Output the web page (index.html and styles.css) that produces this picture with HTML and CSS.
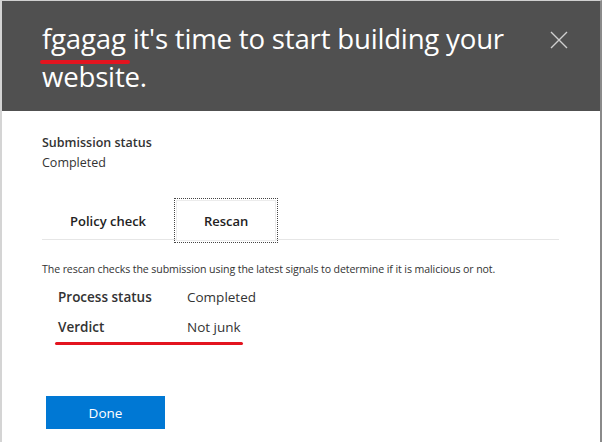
FILE: index.html
```html
<!DOCTYPE html>
<html lang="en">
<head>
<meta charset="utf-8">
<title>Submission</title>
<link rel="stylesheet" href="styles.css">
</head>
<body>
<div class="panel">
  <header class="head">
    <h1 class="title"><span class="mark">fgagag</span> it's time to start building your website.</h1>
    <button class="close" aria-label="Close">
      <svg width="18" height="18" viewBox="0 0 18 18"><path d="M1 1L17 17M17 1L1 17" stroke="#cfcfcf" stroke-width="1.4" fill="none"/></svg>
    </button>
  </header>
  <main class="content">
    <div class="status">
      <div class="label">Submission status</div>
      <div class="value">Completed</div>
    </div>
    <nav class="tabs">
      <div class="tab">Policy check</div>
      <div class="tab active">Rescan</div>
    </nav>
    <p class="desc">The rescan checks the submission using the latest signals to determine if it is malicious or not.</p>
    <div class="facts">
      <div class="row"><span class="k">Process status</span><span class="v">Completed</span></div>
      <div class="row marked"><span class="k">Verdict</span><span class="v">Not junk</span></div>
    </div>
    <div class="actions">
      <button class="done">Done</button>
    </div>
  </main>
</div>
</body>
</html>
```
FILE: styles.css
```css
* { box-sizing: border-box; }
html, body { margin: 0; padding: 0; background: #fff; }
body { font-family: "Open Sans", "Noto Sans", sans-serif; color: #333; }
.panel {
  width: 602px;
  height: 442px;
  border-top: 1px solid #d0d0d0;
  border-left: 2px solid #d4d4d4;
  border-right: 2px solid #8a8a8a;
  display: flex;
  flex-direction: column;
  overflow: hidden;
}
.head {
  background: #505050;
  height: 110px;
  display: flex;
  justify-content: space-between;
  align-items: flex-start;
  padding: 18px 32px 0 40px;
}
.title {
  margin: 0;
  font-weight: 400;
  font-size: 27.6px;
  line-height: 38px;
  color: #fff;
  width: 490px;
  letter-spacing: -0.2px;
}
.mark { position: relative; }
.mark::after {
  content: "";
  position: absolute;
  left: -2px;
  right: -4px;
  bottom: -7px;
  height: 4px;
  border-radius: 2px;
  background: #e3141f;
}
.close {
  background: none;
  border: 0;
  padding: 0;
  margin-top: 12px;
  width: 18px;
  height: 18px;
  cursor: pointer;
}
.close svg { display: block; }
.content {
  padding: 0 41px 0 40px;
  flex: 1;
}
.status { padding-top: 22px; }
.label { font-weight: 600; font-size: 12.5px; line-height: 20px; color: #333; }
.value { font-size: 12.5px; line-height: 20px; color: #333; }
.tabs {
  margin-top: 28px;
  display: flex;
  border-bottom: 1px solid #e6e6e6;
  height: 39px;
}
.tab {
  font-weight: 600;
  font-size: 13px;
  color: #222;
  padding: 0 30px 0 28px;
  display: flex;
  align-items: center;
  height: 41px;
  margin-top: -1px;
}
.tab.active {
  width: 100px;
  justify-content: center;
  padding: 0;
  border: 1px solid #ececec;
  outline: 1px dotted #444;
  outline-offset: 1px;
  background: #fff;
}
.desc {
  margin: 21px 0 0;
  font-size: 10.6px;
  line-height: 16px;
  color: #333;
  letter-spacing: -0.1px;
}
.facts { padding-left: 16px; margin-top: 5px; }
.row { display: flex; font-size: 13.5px; line-height: 30px; }
.k { width: 129px; font-weight: 600; color: #333; }
.v { color: #333; }
.marked { position: relative; }
.marked::after {
  content: "";
  position: absolute;
  left: -3px;
  width: 188px;
  bottom: -3px;
  height: 3px;
  border-radius: 2px;
  background: #e3141f;
}
.actions { margin-top: 54px; padding-left: 4px; }
.done {
  width: 119px;
  height: 33px;
  background: #0078d4;
  border: 0;
  color: #fff;
  font-family: inherit;
  font-size: 13.5px;
  cursor: pointer;
}
```
